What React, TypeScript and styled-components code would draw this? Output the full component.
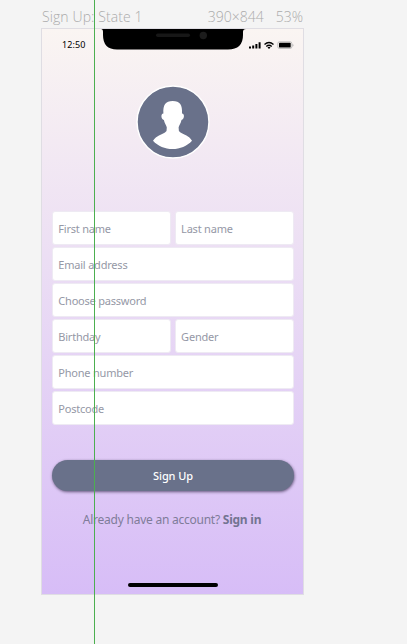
import React from "react";
import styled, { createGlobalStyle } from "styled-components";

const Global = createGlobalStyle`
  * { box-sizing: border-box; }
  body { margin: 0; background: #f4f4f4; overflow: hidden; }
`;

const Canvas = styled.main`
  position: relative;
  width: 407px;
  height: 644px;
  padding: 7px 0 0 41px;
  background: #f4f4f4;
  font-family: "Noto Sans", sans-serif;
`;

const Guide = styled.div`
  position: absolute;
  top: 0;
  bottom: 0;
  left: 94px;
  width: 1px;
  background: #4caf50;
`;

const Caption = styled.header`
  display: flex;
  width: 262px;
  height: 21px;
  padding-left: 1px;
  font: 300 14px/20px "Open Sans", sans-serif;
  color: #ababab;
  white-space: nowrap;
`;

const Title = styled.span`
  flex: 1;
  letter-spacing: 0.1px;
`;

const Zoom = styled.span`
  margin-left: 12px;
`;

const Artboard = styled.section`
  display: flex;
  flex-direction: column;
  width: 263px;
  height: 567px;
  border: 1px solid #dfdde3;
  background: linear-gradient(180deg, #faf5f2 0%, #d7bdf7 100%);
`;

const StatusBar = styled.div`
  display: flex;
  height: 56px;
`;

const Clock = styled.span`
  width: 59px;
  padding: 9px 0 0 20px;
  font-size: 9px;
  line-height: 14px;
  letter-spacing: 0.1px;
  color: #000;
`;

const Notch = styled.svg`
  display: block;
  width: 145px;
  height: 21px;
`;

const Signals = styled.svg`
  display: block;
  width: 55px;
  height: 21px;
  margin-left: 2px;
`;

const Avatar = styled.svg`
  display: block;
  width: 74px;
  height: 74px;
  margin-left: 94px;
`;

const Form = styled.form`
  display: grid;
  grid-template-columns: 118.5px 118.5px;
  grid-auto-rows: 34px;
  gap: 2.15px 4.3px;
  margin: 51.6px 0 0 10.3px;
`;

const Field = styled.div<{ $wide?: boolean }>`
  grid-column: ${(p) => (p.$wide ? "1 / -1" : "auto")};
  padding-left: 5px;
  border: 1px solid #eeeaf3;
  border-radius: 3px;
  background: #fff;
  font-size: 11px;
  line-height: 34px;
  letter-spacing: -0.21px;
  color: #9598a6;
  white-space: nowrap;
`;

const SubmitButton = styled.button`
  width: 242px;
  height: 31px;
  margin: 34.6px 0 0 10px;
  padding: 0;
  border: 0;
  border-radius: 16px;
  background: #69718a;
  box-shadow: 0.5px 1px 3px rgba(40, 30, 60, 0.65);
  font: 500 11px/31px "Noto Sans", sans-serif;
  letter-spacing: -0.1px;
  color: #fff;
`;

const SignIn = styled.p`
  margin: 21px 0 0;
  padding-right: 1px;
  font-size: 12px;
  line-height: 16px;
  letter-spacing: -0.24px;
  text-align: center;
  white-space: nowrap;
  color: #7f7c99;
`;

const SignInLink = styled.strong`
  font-weight: 700;
  color: #737491;
`;

const HomeIndicator = styled.div`
  width: 90px;
  height: 4px;
  margin: auto 0 7px 86px;
  border-radius: 2px;
  background: #000;
`;

const fields = [
  { label: "First name" },
  { label: "Last name" },
  { label: "Email address", wide: true },
  { label: "Choose password", wide: true },
  { label: "Birthday" },
  { label: "Gender" },
  { label: "Phone number", wide: true },
  { label: "Postcode", wide: true },
];

export default function App() {
  return (
    <>
      <Global />
      <Canvas>
        <Caption>
          <Title>Sign Up: State 1</Title>
          <span>390×844</span>
          <Zoom>53%</Zoom>
        </Caption>
        <Artboard>
          <StatusBar>
            <Clock>12:50</Clock>
            <Notch viewBox="0 0 145 21">
              <path d="M0 0H145Q142 0 142 3V6Q142 20.5 127 20.5H16Q2 20.5 2 6V3Q2 0 0 0Z" fill="#000" />
              <rect x="55" y="4.5" width="34" height="3.5" rx="1.75" fill="#171717" />
              <circle cx="102.3" cy="6.5" r="3.7" fill="#1c1c1c" />
            </Notch>
            <Signals viewBox="0 0 55 21">
              <path d="M1 17.5h2v2H1zM4.2 16.5h2v3h-2zM7.4 15h2v4.5h-2zM10.6 13.3h2v6.2h-2z" fill="#000" />
              <path d="M16.5 15.5Q21 11.4 25.5 15.5M18.3 17.4Q21 14.9 23.7 17.4" fill="none" stroke="#000" strokeWidth="1.4" />
              <path d="M19.5 18.5Q21 17.2 22.5 18.5L21 20Z" fill="#000" />
              <rect x="29.8" y="12.8" width="14" height="6.7" rx="1.6" fill="none" stroke="#aaa" strokeWidth=".7" />
              <rect x="31" y="13.8" width="11.7" height="4.8" rx=".7" fill="#000" />
              <path d="M44.5 15v2.7q1-.4 1-1.35t-1-1.35" fill="#aaa" />
            </Signals>
          </StatusBar>
          <Avatar viewBox="0 0 74 74">
            <circle cx="37" cy="37" r="36" fill="#69718a" stroke="#fff" strokeWidth="1.5" />
            <path d="M36.7 16C44 16 46.5 20 46 28.5C49 28.5 48.3 34.5 45.5 35C45 38.5 42.8 40.5 42.6 42.5Q42.2 46 44.5 47.5C48 50 53 50.5 56 55.7C51 61 44 64 36.5 64C29 64 22 61 17 55.7C20.5 50.5 25.5 50 29 47.5Q31.2 46 30.8 42.5C30.6 40.5 28.4 38.5 27.9 35C25.1 34.5 24.4 28.5 27.4 28.5C26.9 20 29.4 16 36.7 16Z" fill="#fff" />
          </Avatar>
          <Form onSubmit={(e) => e.preventDefault()}>
            {fields.map(({ label, wide }) => (
              <Field key={label} $wide={wide}>{label}</Field>
            ))}
          </Form>
          <SubmitButton type="button">Sign Up</SubmitButton>
          <SignIn>
            Already have an account? <SignInLink>Sign in</SignInLink>
          </SignIn>
          <HomeIndicator />
        </Artboard>
        <Guide />
      </Canvas>
    </>
  );
}
